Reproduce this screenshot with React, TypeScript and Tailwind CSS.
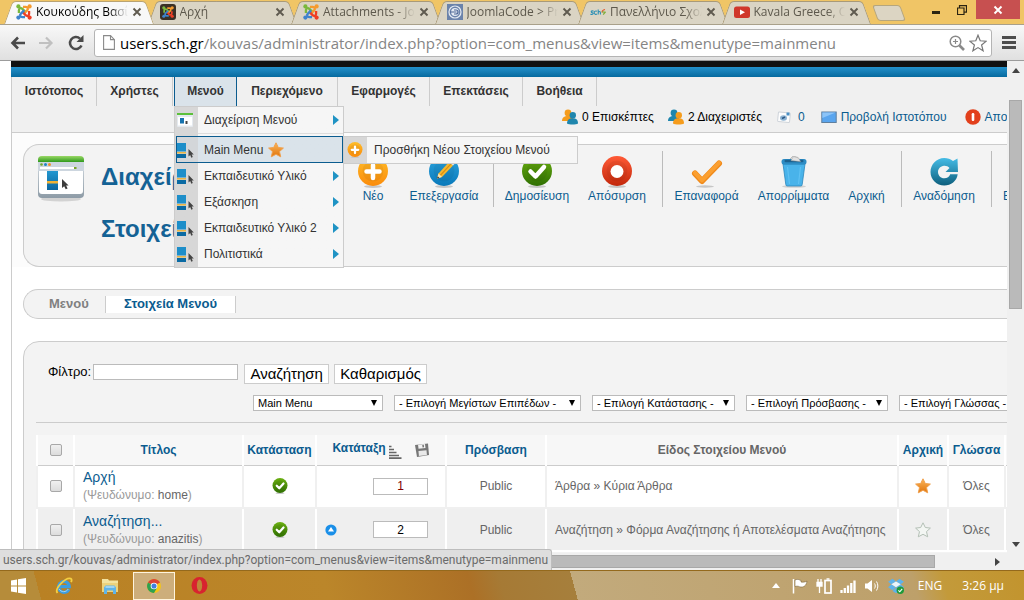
import React, { useState } from "react";

const ARIAL = "font-['Liberation_Sans',Arial,sans-serif]";
const UI = "font-['Open_Sans','Noto_Sans',sans-serif]";

/* ---------- Icons ---------- */

function JoomlaIcon() {
  const arm = "M2.9 9V6.3C2.9 4.1 4.9 3.4 6.4 4.9L9.6 8.1";
  const arms = [
    { color: "#7ab83c", angle: 0 },
    { color: "#f59a2e", angle: 90 },
    { color: "#ee3f25", angle: 180 },
    { color: "#3f83cc", angle: 270 },
  ];
  return (
    <svg viewBox="0 0 16 16" className="size-4 shrink-0" aria-hidden="true">
      {arms.map((a) => (
        <g key={a.angle} transform={`rotate(${a.angle} 8 8)`}>
          <circle cx="2.4" cy="2.4" r="2.1" fill={a.color} />
          <path d={arm} fill="none" stroke={a.color} strokeWidth="2.3" />
        </g>
      ))}
    </svg>
  );
}

function DarkJoomlaIcon() {
  return (
    <span className="flex size-4 shrink-0 items-center justify-center rounded-[3px] bg-[#3a3026] *:size-3">
      <JoomlaIcon />
    </span>
  );
}

function JoomlaCodeIcon() {
  return (
    <svg viewBox="0 0 16 16" className="size-4 shrink-0" aria-hidden="true">
      <rect width="16" height="16" fill="#6b83ab" />
      <circle cx="8" cy="8" r="6" fill="none" stroke="#e4eaf3" strokeWidth="1.2" />
      <circle cx="8" cy="8" r="3.9" fill="#e4eaf3" />
      <path d="M3 8h6.5M7 6h2a2 2 0 0 1 0 4H7" fill="none" stroke="#4d6696" strokeWidth="1.2" />
    </svg>
  );
}

function SchIcon() {
  return (
    <svg viewBox="0 0 16 16" className="size-4 shrink-0" aria-hidden="true">
      <path d="M3.6 7.2C2 6.4 .8 7.3 1.4 8.1s2 .6 1.8 1.6S1.2 10.600.5 10M7 7.300C5 6.400 4 8 4.200 9s1.600 1.800 2.800 1" fill="none" stroke="#2c8fb5" strokeWidth="1.100" />
      <path d="M8.200 5.500v5M8.200 8.500c.6-1.300 2.200-1.300 2.200.2v1.800" fill="none" stroke="#2c8fb5" strokeWidth="1.100" />
      <path d="M12 8.500c0-2 1.500-2.800 3-3" fill="none" stroke="#e4572e" strokeWidth="1.200" />
      <path d="M12.200 7.800l3 .4-2 2.500" fill="none" stroke="#7fae3a" strokeWidth="1.200" />
    </svg>
  );
}

function YoutubeIcon() {
  return (
    <svg viewBox="0 0 16 16" className="size-4 shrink-0" aria-hidden="true">
      <rect y="2.500" width="16" height="11.500" rx="2.500" fill="#d0372b" />
      <path d="M6 5.500l5 2.800-5 2.800z" fill="#fff" />
    </svg>
  );
}

function CloseMark({ className }: { className: string }) {
  return (
    <svg viewBox="0 0 10 10" className={className} aria-hidden="true">
      <path d="M1.500 1.500l7 7M8.500 1.500l-7 7" stroke="currentColor" strokeWidth="1.900" fill="none" />
    </svg>
  );
}

function MenuTreeIcon() {
  return (
    <svg viewBox="0 0 18 16" className="h-4 w-[18px]" aria-hidden="true">
      <rect x="0" y="1" width="9" height="8.500" fill="#1d8ec9" />
      <rect x="0" y="10" width="9" height="1.500" fill="#e9b545" />
      <rect x="0" y="12" width="9" height="4" fill="#0a6aa3" />
      <path d="M11.500 7v7.500l1.700-1.400 1.100 2.600 1.500-.7-1.100-2.400h2.100z" fill="#444" />
    </svg>
  );
}

function MenuManagerIcon() {
  return (
    <svg viewBox="0 0 16 16" className="size-4" aria-hidden="true">
      <rect x="0" y="1" width="16" height="14" rx="1" fill="#e4e9ee" />
      <rect x="0" y="1" width="16" height="2" fill="#5cc03a" />
      <rect x="1" y="5" width="14" height="8.500" fill="#fff" />
      <rect x="3" y="6" width="4" height="5.500" fill="#1673ae" />
      <rect x="8.500" y="9" width="2" height="3" fill="#444" />
    </svg>
  );
}

function ManagerLargeIcon() {
  return (
    <svg viewBox="0 0 48 48" className="size-12" aria-hidden="true">
      <defs>
        <linearGradient id="mgGreen" x1="0" y1="0" x2="0" y2="1">
          <stop offset="0" stopColor="#9ad866" />
          <stop offset="1" stopColor="#2f9a1c" />
        </linearGradient>
        <linearGradient id="mgBase" x1="0" y1="0" x2="0" y2="1">
          <stop offset="0" stopColor="#dfe5ea" />
          <stop offset="1" stopColor="#8d9ba6" />
        </linearGradient>
        <linearGradient id="mgBlue" x1="0" y1="0" x2="0" y2="1">
          <stop offset="0" stopColor="#2297d0" />
          <stop offset="1" stopColor="#0d679f" />
        </linearGradient>
      </defs>
      <ellipse cx="24" cy="44" rx="20" ry="2.500" fill="#d2d2d2" />
      <rect x="1" y="1" width="46" height="42" rx="4" fill="url(#mgBase)" />
      <path d="M1 7V5a4 4 0 0 1 4-4h38a4 4 0 0 1 4 4v2z" fill="url(#mgGreen)" />
      <rect x="1" y="7" width="46" height="9" fill="#cdd6df" />
      <circle cx="4.500" cy="9.500" r="1.300" fill="#6fa52c" />
      <circle cx="8.500" cy="9.500" r="1.500" fill="#1f86c2" />
      <circle cx="12.500" cy="9.500" r="1.500" fill="#ee8e2b" />
      <rect x="3" y="12" width="34" height="2" fill="#fff" />
      <rect x="37" y="12" width="2.500" height="2" fill="#7aa52c" />
      <path d="M2 16h44v20a3 3 0 0 1-3 3H5a3 3 0 0 1-3-3z" fill="#fff" />
      <rect x="10" y="16" width="11" height="19" fill="url(#mgBlue)" />
      <rect x="10" y="26" width="11" height="2.500" fill="#f2b234" />
      <path d="M25 24v9l2.200-1.700 1.500 3 1.900-.9-1.500-3h2.500z" fill="#3c3c3c" />
    </svg>
  );
}

function StarIcon({ filled = true, className }: { filled?: boolean; className: string }) {
  return (
    <svg viewBox="0 0 16 16" className={className} aria-hidden="true">
      <defs>
        <linearGradient id="starFill" x1="0" y1="0" x2="0" y2="1">
          <stop offset="0" stopColor="#fbb65a" />
          <stop offset="1" stopColor="#e0740c" />
        </linearGradient>
      </defs>
      <path
        d="M8 .8l2.300 4.700 5.100.6-3.900 3.500 1.200 5.200L8 12.300l-4.700 2.500 1.200-5.200L.6 6.100l5.100-.6z"
        fill={filled ? "url(#starFill)" : "#f3f6f3"}
        stroke={filled ? "#f0a04c" : "#b4c0b6"}
        strokeWidth="1"
        strokeLinejoin="round"
      />
    </svg>
  );
}

function Ball({ id, from, to, children, className }: { id: string; from: string; to: string; children: React.ReactNode; className: string }) {
  return (
    <svg viewBox="0 0 32 32" className={className} aria-hidden="true">
      <defs>
        <linearGradient id={id} x1="0" y1="0" x2="0" y2="1">
          <stop offset="0" stopColor={from} />
          <stop offset="1" stopColor={to} />
        </linearGradient>
      </defs>
      <ellipse cx="16" cy="30.500" rx="9" ry="1.500" fill="#c6c6c6" />
      <circle cx="16" cy="15" r="15" fill={`url(#${id})`} />
      <circle cx="16" cy="15" r="10.500" fill="#000" opacity=".05" />
      {children}
    </svg>
  );
}

const PlusBall = ({ className }: { className: string }) => (
  <Ball id="ballPlus" from="#ffbe2a" to="#fb8b0a" className={className}>
    <path d="M16 9v13M9.500 15.500h13" stroke="#fff" strokeWidth="4.500" strokeLinecap="round" />
  </Ball>
);

const PencilBall = () => (
  <Ball id="ballPencil" from="#2ea5de" to="#0878ba" className="size-8">
    <path d="M9 22.500l1.500-5L21 6l4 3.500L14 21z" fill="#f5b82e" />
    <path d="M12.300 19.300L23 7.800" stroke="#d98d10" strokeWidth="1.200" />
    <path d="M9 22.500l1.500-5 3.500 3.500z" fill="#f7e3b5" />
    <path d="M9 22.500l.7-2.300 1.600 1.600z" fill="#333" />
    <path d="M21 6l1.500-1.600 4 3.500L25 9.500z" fill="#e8e8e8" />
  </Ball>
);

const CheckBall = ({ className }: { className: string }) => (
  <Ball id="ballCheck" from="#6bb011" to="#2f6f02" className={className}>
    <path d="M9.500 15.500l5 5 8.500-9.500" fill="none" stroke="#fff" strokeWidth="4.500" strokeLinecap="round" strokeLinejoin="round" />
  </Ball>
);

const StopBall = () => (
  <Ball id="ballStop" from="#ff5a36" to="#c2270b" className="size-8">
    <circle cx="16" cy="15.500" r="6.500" fill="#fff" />
  </Ball>
);

const BigCheck = () => (
  <svg viewBox="0 0 32 32" className="size-8" aria-hidden="true">
    <ellipse cx="14" cy="30.500" rx="9" ry="1.200" fill="#c6c6c6" />
    <path d="M4 17.500l7 7.500L28 7.500" fill="none" stroke="#f08a1a" strokeWidth="6" strokeLinecap="round" strokeLinejoin="round" />
    <path d="M4 16.800l7 7.500L28 6.800" fill="none" stroke="#fb9f30" strokeWidth="4" strokeLinecap="round" strokeLinejoin="round" />
  </svg>
);

const TrashIcon = () => (
  <svg viewBox="0 0 32 32" className="size-8" aria-hidden="true">
    <ellipse cx="16" cy="30.500" rx="12" ry="1.300" fill="#d0d0d0" />
    <path d="M12 3l3-3 5 1.500 3 4H11z" fill="#dcdcdc" stroke="#a5a5a5" strokeWidth=".6" />
    <path d="M5 8h22l-2.800 20.500a1.500 1.500 0 0 1-1.500 1.500H9.300a1.500 1.500 0 0 1-1.500-1.500z" fill="#49b3ea" stroke="#2b86bb" strokeWidth=".8" />
    <rect x="3.500" y="3" width="25" height="5.500" rx="2.500" fill="#2d8cc4" />
    <rect x="6.500" y="3.800" width="19" height="2.500" rx="1.200" fill="#1b618f" />
    <path d="M13 4.500l2.500-4 5 1.500 2 3.500z" fill="#e2e2e2" stroke="#a5a5a5" strokeWidth=".5" />
    <path d="M9.500 11l2 17M22.500 11l-2 17" stroke="#5fc1f2" strokeWidth="1.200" />
  </svg>
);

const RebuildIcon = () => (
  <svg viewBox="0 0 32 32" className="size-8" aria-hidden="true">
    <defs>
      <linearGradient id="rebuild" x1="0" y1="0" x2="0" y2="1">
        <stop offset="0" stopColor="#45bce6" />
        <stop offset="1" stopColor="#0e5f7d" />
      </linearGradient>
    </defs>
    <path
      d="M25 5l4.500-2.500L30 16H17.500l4-4c-1.300-1.700-3.500-2.500-5.500-2.300-3.500.3-6 3-6 6.300s2.700 6.300 6.300 6.300c3 0 5-1.500 5.900-4.100h7.500C28.800 25 23 29.500 16.300 29.500 8.600 29.500 2.500 23.500 2.500 16S8.500 2 16.200 2c3.400 0 6.500 1.100 8.800 3z"
      fill="url(#rebuild)"
    />
  </svg>
);

function PeopleIcon({ flip = false }: { flip?: boolean }) {
  const a = flip ? "#1f86ad" : "#f59c1c";
  const b = flip ? "#f59c1c" : "#1f86ad";
  return (
    <svg viewBox="0 0 16 16" className="size-4" aria-hidden="true">
      <circle cx="6" cy="4" r="3.400" fill={a} />
      <path d="M0 12c0-3.500 2-5 6-5s5.500 1.500 5.500 5z" fill={a} />
      <circle cx="10.800" cy="6.300" r="3.200" fill={b} />
      <path d="M5 14.500c0-3.500 2-5.200 5.700-5.200s5.300 1.700 5.300 5.200c-2 1.300-9 1.300-11 0z" fill={b} />
    </svg>
  );
}

const MailIcon = () => (
  <svg viewBox="0 0 16 16" className="size-4" aria-hidden="true">
    <rect x="2" y="3.500" width="12" height="9.500" rx="1" transform="rotate(6 8 8)" fill="#fdfdfd" stroke="#cfd4da" />
    <ellipse cx="7.500" cy="9" rx="3.500" ry="2.700" fill="#8db3d3" />
    <path d="M6 9.500l3-1.500" stroke="#2c5a86" strokeWidth="1.800" />
    <rect x="10.500" y="3.500" width="3" height="3" fill="#4b8fc4" />
  </svg>
);

const ScreenIcon = () => (
  <svg viewBox="0 0 16 16" className="size-4" aria-hidden="true">
    <rect x=".8" y="3" width="14.400" height="10.500" fill="#5aa5ee" stroke="#5f7f9e" />
    <path d="M1.300 3.500h13.400L1.300 9z" fill="#8cc4f8" />
  </svg>
);

const LogoutIcon = () => (
  <svg viewBox="0 0 16 16" className="size-4" aria-hidden="true">
    <circle cx="8" cy="8" r="7.700" fill="#e2401c" />
    <rect x="6.700" y="4" width="2.600" height="8" rx="1.200" fill="#fff" />
  </svg>
);

const SortIcon = () => (
  <svg viewBox="0 0 14 14" className="ml-0.5 mt-1 size-3.5" aria-hidden="true">
    <path d="M1 1.500h2.500M1 4.500h5M1 7.500h7.500M1 10.500h10M1 13.200h12.500" stroke="#666" strokeWidth="1.700" />
  </svg>
);

const FloppyIcon = () => (
  <svg viewBox="0 0 16 16" className="size-4" aria-hidden="true">
    <path d="M1 3l13-1.500 1 11.500L3 15z" fill="#777" />
    <path d="M4 2.700l7-.8.500 4-7 .8z" fill="#f3f3f3" />
    <path d="M4.500 9l8-.8.400 4.800-8 .9z" fill="#e9e9e9" />
    <path d="M9 2.800l.3 2.500" stroke="#666" strokeWidth="1.400" />
  </svg>
);

const UpBall = () => (
  <svg viewBox="0 0 12 12" className="size-3" aria-hidden="true">
    <circle cx="6" cy="6" r="5.600" fill="#1a8fe8" />
    <path d="M6 3l3 4.500H3z" fill="#fff" />
  </svg>
);

/* ---------- Browser chrome ---------- */

const tabs = [
  { title: "Κουκούδης Βασί", icon: <JoomlaIcon /> },
  { title: "Αρχή", icon: <DarkJoomlaIcon /> },
  { title: "Attachments - Jo", icon: <JoomlaIcon /> },
  { title: "JoomlaCode > Pr", icon: <JoomlaCodeIcon /> },
  { title: "Πανελλήνιο Σχολ", icon: <SchIcon /> },
  { title: "Kavala Greece, O", icon: <YoutubeIcon /> },
];

function Tab({ title, icon, active }: { title: string; icon: React.ReactNode; active: boolean }) {
  const side = active ? "border-[#b9a372] bg-[#f8f8f8]" : "border-[#a99a78] bg-[#dad4c4]";
  return (
    <div className={`relative flex h-full min-w-0 flex-1 items-center pl-4 pr-0.5 ${active ? "z-10" : ""}`}>
      <span className={`absolute bottom-0 left-1 top-px w-1/2 origin-bottom -skew-x-[20deg] rounded-tl-[4px] border-l border-t ${side}`} />
      <span className={`absolute -right-2.5 bottom-0 top-px w-1/2 origin-bottom skew-x-[20deg] rounded-tr-[4px] border-r border-t ${side}`} />
      <span className={`absolute bottom-0 left-1/4 right-1/4 top-0.5 ${active ? "bg-[#f8f8f8]" : "bg-[#dad4c4]"}`} />
      <span className="relative flex w-full items-center gap-1">
        {icon}
        <span className={`min-w-0 flex-1 whitespace-nowrap text-xs ${active ? "text-black" : "text-[#5d584c]"} mask-r-from-80%`}>
          {title}
        </span>
        <button aria-label="Κλείσιμο καρτέλας" className="text-[#5f5a4f]">
          <CloseMark className="size-2.5" />
        </button>
      </span>
    </div>
  );
}

function TabStrip() {
  return (
    <div className="flex h-[25px] shrink-0 items-stretch border-b border-[#a9a08a] bg-[#f0c566]">
      <div className="flex w-[861px] shrink-0">
        {tabs.map((t, i) => (
          <Tab key={t.title} title={t.title} icon={t.icon} active={i === 0} />
        ))}
      </div>
      <button aria-label="Νέα καρτέλα" className="ml-3.5 mt-[5px] h-4 w-7 skew-x-[20deg] rounded-[3px] border border-[#b5a67e] bg-[#dcd5c3]" />
      <div className="ml-auto mr-1 flex items-start">
        <button aria-label="Ελαχιστοποίηση" className="flex h-5 w-6 items-center justify-center">
          <span className="mt-1 h-[3px] w-2 bg-[#2b2412]" />
        </button>
        <button aria-label="Επαναφορά" className="flex h-5 w-7 items-center justify-center text-[#2b2412]">
          <svg viewBox="0 0 10 10" className="size-2.5" aria-hidden="true">
            <path d="M.5 3h6.500v6.500H.500zM2.500 3V.7h7v6.500H7.200" fill="none" stroke="currentColor" strokeWidth="1.200" />
          </svg>
        </button>
        <button aria-label="Κλείσιμο" className="flex h-[19px] w-11 items-center justify-center bg-[#c75050] text-white">
          <CloseMark className="size-2.5" />
        </button>
      </div>
    </div>
  );
}

const ADDRESS_PATH = "/kouvas/administrator/index.php?option=com_menus&view=items&menutype=mainmenu";

function AddressBar() {
  return (
    <div className="flex h-9 shrink-0 items-center border-b border-[#9c9c9c] bg-linear-to-b from-[#f8f8f8] to-[#e0e0e0] pl-2.5 pr-2">
      <button aria-label="Πίσω" className="text-[#4a4a4a]">
        <svg viewBox="0 0 16 16" className="size-4" aria-hidden="true">
          <path d="M15 8H3M8 2.500L2.500 8 8 13.500" fill="none" stroke="currentColor" strokeWidth="2.600" />
        </svg>
      </button>
      <button aria-label="Εμπρός" className="ml-3 text-[#c0c0c0]">
        <svg viewBox="0 0 16 16" className="size-4" aria-hidden="true">
          <path d="M1 8h12M8 2.500L13.500 8 8 13.500" fill="none" stroke="currentColor" strokeWidth="2.200" />
        </svg>
      </button>
      <button aria-label="Ανανέωση" className="ml-3.5 text-[#4a4a4a]">
        <svg viewBox="0 0 16 16" className="size-4" aria-hidden="true">
          <path d="M13.500 10.500A6 6 0 1 1 12 3.600" fill="none" stroke="currentColor" strokeWidth="2.500" />
          <path d="M15.500 0v7H8.500z" fill="currentColor" />
        </svg>
      </button>
      <div className="ml-2.5 flex h-7 min-w-0 flex-1 items-center rounded-[3px] border border-[#b4b4b4] bg-white pl-2 pr-1">
        <svg viewBox="0 0 12 15" className="h-[15px] w-3 shrink-0" aria-hidden="true">
          <path d="M.6.6h6.900l3.900 4v9.800H.6z" fill="#fff" stroke="#8a8a8a" strokeWidth="1.100" />
          <path d="M7.500.6v4h4" fill="none" stroke="#8a8a8a" strokeWidth="1.100" />
        </svg>
        <span className="ml-[5px] flex-1 overflow-hidden whitespace-nowrap text-[15px] leading-6 text-[#858585]">
          <span className="text-black">users.sch.gr</span>
          {ADDRESS_PATH}
        </span>
        <svg viewBox="0 0 16 16" className="size-4 shrink-0" aria-hidden="true">
          <circle cx="6.500" cy="6.500" r="5.300" fill="none" stroke="#8a8a8a" strokeWidth="1.500" />
          <path d="M10.500 10.500l4.500 4.500" stroke="#8a8a8a" strokeWidth="2.600" />
          <path d="M6.500 4v5M4 6.500h5" stroke="#8a8a8a" strokeWidth="1.200" />
        </svg>
        <svg viewBox="0 0 18 18" className="ml-1 size-[18px] shrink-0" aria-hidden="true">
          <path d="M9 1.200l2.200 5.600 6 .4-4.600 3.800 1.500 5.800L9 13.600l-5.100 3.200 1.500-5.800L.8 7.200l6-.4z" fill="#fff" stroke="#777" strokeWidth="1.200" />
        </svg>
      </div>
      <button aria-label="Μενού προγράμματος" className="ml-2.5 flex w-3.5 flex-col gap-0.5">
        <span className="h-[3px] w-full bg-[#4d4d4d]" />
        <span className="h-[3px] w-full bg-[#4d4d4d]" />
        <span className="h-[3px] w-full bg-[#4d4d4d]" />
      </button>
    </div>
  );
}

/* ---------- Administrator page ---------- */

const dropdownItems = ["Main Menu", "Εκπαιδευτικό Υλικό", "Εξάσκηση", "Εκπαιδευτικό Υλικό 2", "Πολιτιστικά"];

function Triangle() {
  return (
    <svg viewBox="0 0 6 10" className="ml-auto mr-1 h-2.5 w-1.5" aria-hidden="true">
      <path d="M0 0l6 5-6 5z" fill="#1f93c4" />
    </svg>
  );
}

function Dropdown() {
  return (
    <div className="absolute -left-px top-full z-20 w-[170px] border border-[#ccc] bg-linear-to-r from-[#d7d7d7] from-[23px] to-[#f6f6f6] to-[23px] text-xs font-normal text-[#333]">
      <a href="#menus" className="flex h-[26px] items-center pl-0.5">
        <MenuManagerIcon />
        <span className="ml-[11px]">Διαχείριση Μενού</span>
        <Triangle />
      </a>
      <div className="mb-0.5 ml-[23px] border-t border-[#ddd]" />
      {dropdownItems.map((label, i) =>
        i === 0 ? (
          <div key={label} className="relative">
            <a href="#mainmenu" className="ml-px flex h-[27px] items-center border border-[#0b5c8f] bg-linear-to-r from-[#d3d6d9] from-[21px] to-[#dae3ea] to-[21px]">
              <MenuTreeIcon />
              <span className="ml-[9px]">{label}</span>
              <StarIcon className="ml-[5px] size-4" />
            </a>
            <a href="#new" className="absolute left-full top-0 flex h-7 w-[235px] items-center border border-[#ccc] bg-linear-to-r from-[#d7d7d7] from-[23px] to-[#f6f6f6] to-[23px] pl-[3px]">
              <PlusBall className="size-4" />
              <span className="ml-[11px]">Προσθήκη Νέου Στοιχείου Μενού</span>
            </a>
          </div>
        ) : (
          <a key={label} href="#items" className="flex h-[26px] items-center pl-0.5">
            <MenuTreeIcon />
            <span className="ml-[9px]">{label}</span>
            <Triangle />
          </a>
        ),
      )}
    </div>
  );
}

function MainMenu() {
  const item = "flex h-[29px] items-center justify-center border-r border-[#ccc] pb-0.5";
  return (
    <div className="border-b border-[#ccc] bg-[#f0f0f0]">
      <nav className="flex text-xs font-bold text-[#333]">
        <a href="#site" className={`${item} w-[85px]`}>Ιστότοπος</a>
        <a href="#users" className={`${item} w-[76px]`}>Χρήστες</a>
        <div className="relative ml-px w-[63px] border-x border-[#0b5c8f] bg-[#dae3ea]">
          <a href="#menus" className="flex h-[29px] items-center justify-center pb-0.5">Μενού</a>
          <Dropdown />
        </div>
        <a href="#content" className={`${item} w-[101px]`}>Περιεχόμενο</a>
        <a href="#components" className={`${item} w-[92px]`}>Εφαρμογές</a>
        <a href="#extensions" className={`${item} w-[93px]`}>Επεκτάσεις</a>
        <a href="#help" className={`${item} w-[74px]`}>Βοήθεια</a>
      </nav>
      <div className="flex h-[26px] items-start pl-[550px] pt-[3px] text-xs text-black">
        <span className="flex items-center gap-1"><PeopleIcon />0 Επισκέπτες</span>
        <span className="ml-3.5 flex items-center gap-1"><PeopleIcon flip />2 Διαχειριστές</span>
        <a href="#messages" className="ml-3.5 flex items-center gap-1.5 text-[#0b5c8f]"><MailIcon />0</a>
        <a href="#preview" className="ml-4 flex items-center gap-1 text-[#0b5c8f]"><ScreenIcon />Προβολή Ιστοτόπου</a>
        <a href="#logout" className="ml-[18px] flex items-center gap-1 text-[#0b5c8f]"><LogoutIcon />Αποσύνδεση</a>
      </div>
    </div>
  );
}

function Tool({ label, icon, className }: { label: string; icon?: React.ReactNode; className: string }) {
  return (
    <button className={`flex h-14 shrink-0 flex-col items-center ${className}`}>
      <span className="flex h-[37px] items-end">{icon}</span>
      <span className="leading-4">{label}</span>
    </button>
  );
}

function TitleBar() {
  return (
    <div className="bg-[#fcfcfc] pl-[11px] pt-[11px]">
      <header className="flex h-[123px] rounded-l-2xl border border-r-0 border-[#ccc] bg-[#f3f3f3]">
        <div className="ml-[13px] mt-2.5 w-16 shrink-0"><ManagerLargeIcon /></div>
        <h1 className="mt-1.5 w-[243px] shrink-0 text-2xl font-bold leading-[52px] text-[#146295]">
          Διαχείριση<br />Στοιχεία
        </h1>
        <div className="mt-1.5 flex h-14 text-xs text-[#0b5c8f]">
          <div className="flex border-r border-[#bbb] pr-[7px]">
            <Tool label="Νέο" icon={<PlusBall className="size-8" />} className="w-[58px]" />
            <Tool label="Επεξεργασία" icon={<PencilBall />} className="w-[84px]" />
          </div>
          <div className="flex border-r border-[#bbb] pr-2">
            <Tool label="Δημοσίευση" icon={<CheckBall className="size-8" />} className="w-[86px]" />
            <Tool label="Απόσυρση" icon={<StopBall />} className="w-[74px]" />
          </div>
          <div className="flex border-r border-[#bbb] pr-[5px]">
            <Tool label="Επαναφορά" icon={<BigCheck />} className="w-[87px]" />
            <Tool label="Απορρίμματα" icon={<TrashIcon />} className="w-[87px]" />
            <Tool label="Αρχική" className="w-[59px]" />
          </div>
          <div className="flex border-r border-[#bbb] pr-[5px]">
            <Tool label="Αναδόμηση" icon={<RebuildIcon />} className="w-[84px]" />
          </div>
          <Tool label="Επιλογές" className="px-[11px]" />
        </div>
      </header>
    </div>
  );
}

function SubMenu() {
  return (
    <nav className="ml-[11px] mt-[22px] flex h-[30px] items-center rounded-l-2xl border border-r-0 border-[#ccc] bg-[#f3f3f3] pl-[25px] text-[13px] font-bold leading-[15px]">
      <a href="#menus" className="w-14 pb-0.5 text-[#808080]">Μενού</a>
      <a href="#items" className="w-[131px] border-x border-[#ccc] bg-white pb-0.5 text-center text-[#0b5c8f]">Στοιχεία Μενού</a>
    </nav>
  );
}

function Choice({ label, className }: { label: string; className: string }) {
  return (
    <div className={`relative shrink-0 ${className}`}>
      <select aria-label={label} className="block h-4 w-full appearance-none border border-[#bbb] bg-white pl-1 text-[11px] leading-[14px] text-black">
        <option>{label}</option>
      </select>
      <svg viewBox="0 0 6 6" className="pointer-events-none absolute right-1.5 top-[5px] size-1.5" aria-hidden="true">
        <path d="M0 0h6L3 6z" fill="#000" />
      </svg>
    </div>
  );
}

function Filters() {
  return (
    <form className="border-b border-[#ccc] pb-[11px]" onSubmit={(e) => e.preventDefault()}>
      <div className="flex items-start pl-3">
        <label htmlFor="filter" className="mr-0.5 text-[13px] leading-[15px]">Φίλτρο:</label>
        <input id="filter" className="h-4 w-[145px] border border-[#bbb] bg-white px-1 text-[11px]" />
        <button className="ml-1.5 h-5 w-[85px] border border-[#ccc] bg-white text-[15px] leading-[18px]">Αναζήτηση</button>
        <button type="reset" className="ml-[5px] h-5 w-[93px] border border-[#ccc] bg-white text-[15px] leading-[18px]">Καθαρισμός</button>
      </div>
      <div className="mt-[11px] flex gap-[11px] pl-[217px]">
        <Choice label="Main Menu" className="w-[130px]" />
        <Choice label="- Επιλογή Μεγίστων Επιπέδων -" className="w-[187px]" />
        <Choice label="- Επιλογή Κατάστασης -" className="w-[143px]" />
        <Choice label="- Επιλογή Πρόσβασης -" className="w-[142px]" />
        <Choice label="- Επιλογή Γλώσσας -" className="w-[136px]" />
      </div>
    </form>
  );
}

const CHECKBOX =
  "block mx-auto size-3 appearance-none rounded-[2px] border border-[#a8a8a8] bg-linear-to-b from-[#f0f0f0] to-[#dcdcdc] checked:bg-[#8fb4d6] checked:bg-none";

const rows = [
  { title: "Αρχή", alias: "home", order: "1", type: "Άρθρα » Κύρια Άρθρα", home: true },
  { title: "Αναζήτηση...", alias: "anazitis", order: "2", type: "Αναζήτηση » Φόρμα Αναζήτησης ή Αποτελέσματα Αναζήτησης", home: false },
];

function ItemsTable() {
  const [orders, setOrders] = useState(rows.map((r) => r.order));
  return (
    <table className="mt-3 w-[1050px] table-fixed border-collapse text-xs text-[#666]">
      <colgroup>
        <col className="w-[37px]" />
        <col className="w-[169px]" />
        <col className="w-[73px]" />
        <col className="w-[130px]" />
        <col className="w-[100px]" />
        <col className="w-[352px]" />
        <col className="w-[50px]" />
        <col className="w-[57px]" />
        <col />
      </colgroup>
      <thead>
        <tr className="h-[30px] bg-[#f7f7f7] text-[#0b5c8f] [&>th]:border-x-2 [&>th]:border-b [&>th]:border-x-white [&>th]:border-b-[#ccc] [&>th]:p-0">
          <th><input type="checkbox" aria-label="Επιλογή όλων" className={CHECKBOX} /></th>
          <th>Τίτλος</th>
          <th>Κατάσταση</th>
          <th>
            <span className="flex items-center justify-center">
              <span className="mb-1">Κατάταξη</span>
              <SortIcon />
              <button aria-label="Αποθήκευση σειράς" className="ml-3"><FloppyIcon /></button>
            </span>
          </th>
          <th>Πρόσβαση</th>
          <th className="text-[#666]">Είδος Στοιχείου Μενού</th>
          <th>Αρχική</th>
          <th>Γλώσσα</th>
          <th />
        </tr>
      </thead>
      <tbody>
        {rows.map((r, i) => (
          <tr
            key={r.title}
            className={
              i % 2 === 0
                ? "h-[43px] bg-white [&>td]:border-x-2 [&>td]:border-b-2 [&>td]:border-[#f0f0f0] [&>td]:p-0"
                : "h-[43px] bg-[#efefef] [&>td]:border-2 [&>td]:border-t-[#f0f0f0] [&>td]:border-white [&>td]:p-0"
            }
          >
            <td><input type="checkbox" aria-label={r.title} className={CHECKBOX} /></td>
            <td>
              <div className="pl-2">
                <a href="#edit" className="block text-sm leading-[18px] text-[#0b5c8f]">{r.title}</a>
                <p className="leading-[18px] text-[#999]">(Ψευδώνυμο: <span className="text-[#666]">{r.alias}</span>)</p>
              </div>
            </td>
            <td><button aria-label="Δημοσιευμένο" className="mx-auto block"><CheckBall className="size-4" /></button></td>
            <td>
              <div className="flex items-center pl-2">
                <span className="w-12">{i > 0 && <button aria-label="Μετακίνηση πάνω" className="block"><UpBall /></button>}</span>
                <input
                  aria-label="Σειρά"
                  value={orders[i]}
                  onChange={(e) => setOrders(orders.map((o, k) => (k === i ? e.target.value : o)))}
                  className={`h-[17px] w-[55px] border border-[#bbb] bg-white text-center text-xs ${i === 0 ? "text-[#800000]" : "text-black"}`}
                />
              </div>
            </td>
            <td className="text-center">Public</td>
            <td><div className="whitespace-nowrap pl-2">{r.type}</div></td>
            <td><StarIcon filled={r.home} className="mx-auto size-4" /></td>
            <td className="text-center">Όλες</td>
            <td />
          </tr>
        ))}
      </tbody>
    </table>
  );
}

function AdminPage() {
  return (
    <main className={`min-w-0 flex-1 overflow-hidden bg-white pl-[11px] text-black ${ARIAL}`}>
      <div className="h-1.5 bg-[#111]" />
      <div className="h-2.5 bg-linear-to-b from-[#2391cb] to-[#066a9f]" />
      <div className="h-full min-w-[1130px] border-l border-[#ccc]">
        <MainMenu />
        <TitleBar />
        <SubMenu />
        <section className="ml-[11px] mt-[22px] h-80 rounded-tl-2xl border border-[#ccc] bg-[#f3f3f3] pl-3 pt-[22px]">
          <Filters />
          <ItemsTable />
        </section>
      </div>
    </main>
  );
}

function VerticalScrollbar() {
  return (
    <div className="flex w-[17px] shrink-0 flex-col items-center bg-[#f0f0f0]">
      <svg viewBox="0 0 8 5" className="mt-[7px] h-[5px] w-2" aria-hidden="true"><path d="M0 5l4-5 4 5z" fill="#444" /></svg>
      <div className="mt-[27px] h-[209px] w-[13px] border border-[#a8a8a8] bg-[#bababa]" />
      <svg viewBox="0 0 8 5" className="mb-1.5 mt-auto h-[5px] w-2" aria-hidden="true"><path d="M0 0h8L4 5z" fill="#444" /></svg>
    </div>
  );
}

function HorizontalScrollbar() {
  return (
    <div className="flex h-[17px] shrink-0 items-center bg-[#f0f0f0] pl-[17px] pr-6">
      <div className="h-[13px] w-[918px] border border-[#a8a8a8] bg-[#bababa]" />
      <svg viewBox="0 0 5 8" className="ml-auto h-2 w-[5px]" aria-hidden="true"><path d="M0 0l5 4-5 4z" fill="#444" /></svg>
    </div>
  );
}

/* ---------- Taskbar ---------- */

function Taskbar() {
  return (
    <footer className="flex h-[30px] shrink-0 items-center border-t border-[#94691c] bg-[linear-gradient(75deg,#b68c3a_0%,#b68c3a_4%,#b98124_4%,#bb862a_32%,#ac7026_46%,#a67a35_49%,#a67f3c_56%,#c2aa7c_56%,#bda06a_89%,#c39a3a_92%,#c2942e_100%)] text-xs text-white">
      <button aria-label="Έναρξη" className="ml-[11px]">
        <svg viewBox="0 0 16 16" className="size-4" aria-hidden="true">
          <path d="M0 2.500l6-1v6H0zM7 1.300L15 0v7.500H7zM0 8.500h6v6l-6-1zM7 8.500h8V16l-8-1.300z" fill="#fff" />
        </svg>
      </button>
      <button aria-label="Internet Explorer" className="ml-7">
        <svg viewBox="0 0 18 18" className="size-[18px]" aria-hidden="true">
          <path d="M13.800 12.200A5.400 5.400 0 1 1 14.300 9.700H5" fill="none" stroke="#3d9de0" strokeWidth="3.200" />
          <path d="M13.300 12A5.400 5.400 0 0 1 4 12" fill="none" stroke="#9fd6f7" strokeWidth="1" />
          <path d="M2.500 16C-1 12 10.500 0 15.800 1.600c1.200.6.900 2.200.3 3.600" fill="none" stroke="#f4cf42" strokeWidth="1.800" />
        </svg>
      </button>
      <button aria-label="Εξερεύνηση αρχείων" className="ml-7">
        <svg viewBox="0 0 18 16" className="h-4 w-[18px]" aria-hidden="true">
          <path d="M1 1h6l1 1.500h9V13H1z" fill="#f3e3a0" />
          <path d="M1 5h16v9H1z" fill="#ecd27c" />
          <path d="M3 16V9.500l1.500-2h9l1.500 2V16h-3v-3.500H6V16z" fill="#5fb4e8" />
          <path d="M4.500 9h9" stroke="#c9e8fa" strokeWidth="1.200" />
        </svg>
      </button>
      <button aria-label="Chrome" className="ml-3.5 flex h-7 w-[42px] items-center justify-center border border-[#fff4dc] bg-[#cdae7b]">
        <svg viewBox="0 0 16 16" className="size-3.5" aria-hidden="true">
          <circle cx="8" cy="8" r="8" fill="#f5c518" />
          <path d="M8 8L1.100 4A8 8 0 0 1 14.900 4z" fill="#db4437" />
          <path d="M8 8L1.100 4A8 8 0 0 0 8 16l3.500-6z" fill="#2fa150" />
          <circle cx="8" cy="8" r="3.800" fill="#fff" />
          <circle cx="8" cy="8" r="2.900" fill="#3f7fe0" />
        </svg>
      </button>
      <button aria-label="Opera" className="ml-4">
        <svg viewBox="0 0 16 16" className="size-[17px]" aria-hidden="true">
          <ellipse cx="8" cy="8" rx="7.500" ry="8" fill="#d8232f" />
          <ellipse cx="8" cy="8" rx="2.500" ry="5.700" fill="#c08538" />
        </svg>
      </button>
      <div className="ml-auto mr-5 flex items-center">
        <svg viewBox="0 0 8 5" className="mr-3 h-[5px] w-2" aria-hidden="true"><path d="M0 5l4-5 4 5z" fill="#fff" /></svg>
        <svg viewBox="0 0 16 16" className="mr-2 size-4" aria-hidden="true">
          <path d="M1.500 1v14.500" stroke="#fff" strokeWidth="1.500" />
          <path d="M3 2c3-1.500 4 0 6 .5V4c2 .5 4 0 6-.8-.5 3-2 6-6 5.800-2-.2-3-1.500-6-.5z" fill="#fff" stroke="#6b5326" strokeWidth=".5" />
        </svg>
        <svg viewBox="0 0 16 16" className="mr-2 size-4" aria-hidden="true">
          <path d="M2 1v3M5 1v3M1 4.500h5V8H1zM3.500 8v7" fill="#fff" stroke="#fff" strokeWidth="1.300" />
          <rect x="9" y="2.500" width="6" height="12.500" fill="none" stroke="#fff" strokeWidth="1.700" />
          <path d="M10.500 1h3" stroke="#fff" strokeWidth="1.500" />
        </svg>
        <svg viewBox="0 0 16 16" className="mr-2 size-4" aria-hidden="true">
          <path d="M1.500 15v-3M4.800 15v-5M8 15V7.500M11.300 15V5M14.500 15V2.500" stroke="#fff" strokeWidth="2.300" />
        </svg>
        <svg viewBox="0 0 16 16" className="mr-2 size-4" aria-hidden="true">
          <path d="M1 5.500h2.500L8 2v12l-4.500-3.500H1z" fill="#fff" />
          <path d="M10.500 5.500c1 1.600 1 3.400 0 5M12.500 3.500c1.800 2.800 1.800 6.200 0 9" fill="none" stroke="#fff" />
        </svg>
        <svg viewBox="0 0 16 16" className="mr-3.5 size-4" aria-hidden="true">
          <path d="M4.500.8L0 3.700l3.300 2.600L8 3.500zM11.500.8L16 3.700l-3.300 2.600L8 3.500zM0 9.200l4.500 3L8 9.200 3.300 6.300zM16 9.200l-4.500 3L8 9.200l4.700-2.900zM8 9.900l-3.500 3L8 15.200l3.500-2.300z" fill="#5fb2ea" />
          <path d="M8 3.500l4.700 2.800L8 9.200 3.300 6.300z" fill="#e9f5fd" />
          <circle cx="12.300" cy="12.300" r="3.700" fill="#1f9a3a" />
          <path d="M10.400 12.400l1.400 1.400 2.400-3" fill="none" stroke="#fff" strokeWidth="1.100" />
        </svg>
        <span>ENG</span>
        <time className="ml-5">3:26 μμ</time>
      </div>
    </footer>
  );
}

export default function App() {
  return (
    <div className={`flex h-screen flex-col overflow-hidden bg-white ${UI}`}>
      <TabStrip />
      <AddressBar />
      <div className="relative flex min-h-0 flex-1 flex-col">
        <div className="flex min-h-0 flex-1">
          <AdminPage />
          <VerticalScrollbar />
        </div>
        <HorizontalScrollbar />
        <div className="absolute bottom-0 left-0 z-30 h-[21px] whitespace-nowrap rounded-tr-[3px] border-r border-t border-[#bdbdbd] bg-[#dedede] px-[3px] font-['Roboto','Open_Sans',sans-serif] text-xs leading-5 text-[#6b6b6b]">
          users.sch.gr{ADDRESS_PATH}
        </div>
      </div>
      <Taskbar />
    </div>
  );
}
